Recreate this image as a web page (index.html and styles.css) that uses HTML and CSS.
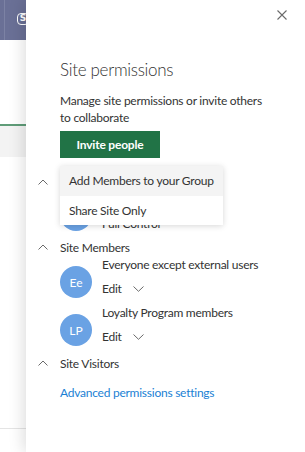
FILE: index.html
```html
<!DOCTYPE html>
<html>
<head>
<meta charset="utf-8">
<link rel="stylesheet" href="styles.css">
</head>
<body>
<div class="page">
  <div class="bg">
    <div class="suitebar"><span class="skype">S</span></div>
    <div class="bg-top"></div>
    <div class="bg-tab"></div>
    <div class="bg-rest"></div>
    <div class="bg-foot"></div>
  </div>
  <div class="panel">
    <div class="panel-head">
      <svg class="close" width="10" height="10" viewBox="0 0 10 10"><path d="M0.5 0.5 L9.5 9.5 M9.5 0.5 L0.5 9.5" stroke="#6a6a6a" stroke-width="1.1" fill="none"/></svg>
    </div>
    <h1 class="title">Site permissions</h1>
    <p class="desc">Manage site permissions or invite others to collaborate</p>
    <div class="invite-wrap">
      <button class="invite">Invite people</button>
      <div class="menu">
        <div class="menu-item hover">Add Members to your Group</div>
        <div class="menu-item">Share Site Only</div>
      </div>
    </div>
    <div class="section owners">
      <div class="sec-head">
        <svg class="chev" width="10" height="6" viewBox="0 0 10 6"><path d="M0.5 5.5 L5 1 L9.5 5.5" stroke="#6a6a6a" stroke-width="1" fill="none"/></svg>
      </div>
      <div class="member">
        <div class="avatar"></div>
        <div class="info">
          <div class="name"></div>
          <div class="role">Full Control</div>
        </div>
      </div>
    </div>
    <div class="section">
      <div class="sec-head">
        <svg class="chev" width="10" height="6" viewBox="0 0 10 6"><path d="M0.5 5.5 L5 1 L9.5 5.5" stroke="#6a6a6a" stroke-width="1" fill="none"/></svg>
        <span>Site Members</span>
      </div>
      <div class="member">
        <div class="avatar">Ee</div>
        <div class="info">
          <div class="name">Everyone except external users</div>
          <div class="edit">Edit <svg class="down" width="11" height="6" viewBox="0 0 11 6"><path d="M0.5 0.5 L5.5 5.3 L10.5 0.5" stroke="#6a6a6a" stroke-width="1" fill="none"/></svg></div>
        </div>
      </div>
      <div class="member">
        <div class="avatar">LP</div>
        <div class="info">
          <div class="name">Loyalty Program members</div>
          <div class="edit">Edit <svg class="down" width="11" height="6" viewBox="0 0 11 6"><path d="M0.5 0.5 L5.5 5.3 L10.5 0.5" stroke="#6a6a6a" stroke-width="1" fill="none"/></svg></div>
        </div>
      </div>
    </div>
    <div class="section">
      <div class="sec-head">
        <svg class="chev" width="10" height="6" viewBox="0 0 10 6"><path d="M0.5 5.5 L5 1 L9.5 5.5" stroke="#6a6a6a" stroke-width="1" fill="none"/></svg>
        <span>Site Visitors</span>
      </div>
    </div>
    <a class="adv" href="#">Advanced permissions settings</a>
  </div>
</div>
</body>
</html>
```
FILE: styles.css
```css
* { box-sizing: border-box; }
html, body { margin: 0; padding: 0; }
body {
  width: 305px;
  height: 452px;
  overflow: hidden;
  font-family: "Segoe UI", Lato, "Noto Sans", sans-serif;
  font-size: 12px;
  letter-spacing: -0.25px;
  color: #333;
  background: #fff;
}
.page {
  display: flex;
  height: 452px;
}
.bg {
  width: 26px;
  flex: none;
  display: flex;
  flex-direction: column;
}
.suitebar {
  height: 40px;
  background: #6a7096;
  box-shadow: inset 4px 0 0 #6a7096, inset 5px 0 0 #7c82a4;
  padding: 13px 0 0 17px;
}
.skype {
  display: block;
  width: 12px;
  height: 12px;
  border: 1.5px solid #fff;
  border-radius: 4px;
  color: #fff;
  font: bold 9px/9px "DejaVu Sans", sans-serif;
  letter-spacing: 0;
  text-align: center;
}
.bg-top { height: 86px; background: #fff; border-bottom: 2px solid #5f9c78; }
.bg-tab { height: 31px; background: #f3f3f3; }
.bg-rest { height: 272px; background: #fff; border-bottom: 1px solid #e4e4e4; }
.bg-foot { flex: 1; background: #fff; }

.panel {
  position: relative;
  z-index: 1;
  flex: 1;
  background: #fff;
  box-shadow: -3px 0 14px rgba(0, 0, 0, 0.13);
  padding-left: 34px;
}
.panel-head {
  height: 58px;
  display: flex;
  justify-content: flex-end;
  align-items: flex-start;
  padding: 10px 18px 0 0;
}
.title {
  margin: 0;
  font-size: 17px;
  letter-spacing: -0.3px;
  font-weight: 300;
  line-height: 24px;
  color: #333;
}
.desc {
  margin: 10px 0 0;
  width: 208px;
  line-height: 17px;
}
.invite-wrap {
  position: relative;
  margin-top: 5px;
}
.invite {
  width: 100px;
  height: 27px;
  border: none;
  background: #217346;
  color: #fff;
  font-family: inherit;
  font-size: 12px;
  letter-spacing: -0.2px;
  font-weight: 700;
  padding: 0;
}
.menu {
  position: absolute;
  left: 0;
  top: 35px;
  width: 163px;
  background: #fff;
  box-shadow: 0 1px 6px rgba(0, 0, 0, 0.16);
  z-index: 2;
}
.menu-item {
  height: 29.5px;
  line-height: 29.5px;
  padding-left: 9px;
  color: #333;
  white-space: nowrap;
}
.menu-item.hover { background: #f4f4f4; }

.section { position: relative; }
.sec-head {
  height: 20px;
  display: flex;
  align-items: center;
  position: relative;
}
.chev {
  position: absolute;
  left: -22px;
  top: 7px;
}
.owners { margin-top: 14px; }
.member {
  display: flex;
  height: 48px;
}
.avatar {
  width: 32px;
  height: 32px;
  border-radius: 50%;
  background: #6aa2e4;
  color: #fff;
  font-size: 12px;
  letter-spacing: 0;
  display: flex;
  align-items: center;
  justify-content: center;
  margin-top: 9px;
  flex: none;
}
.info { margin-left: 10px; }
.name { line-height: 16px; height: 16px; }
.role { line-height: 16px; margin-top: 8px; }
.edit {
  line-height: 20px;
  margin-top: 6px;
  display: flex;
  align-items: center;
}
.down { margin-left: 11px; }
.owners .member { height: 45px; }
.owners .avatar { margin-top: 7px; }
.adv {
  display: block;
  margin-top: 12px;
  color: #1a7fd4;
  text-decoration: none;
}
```
